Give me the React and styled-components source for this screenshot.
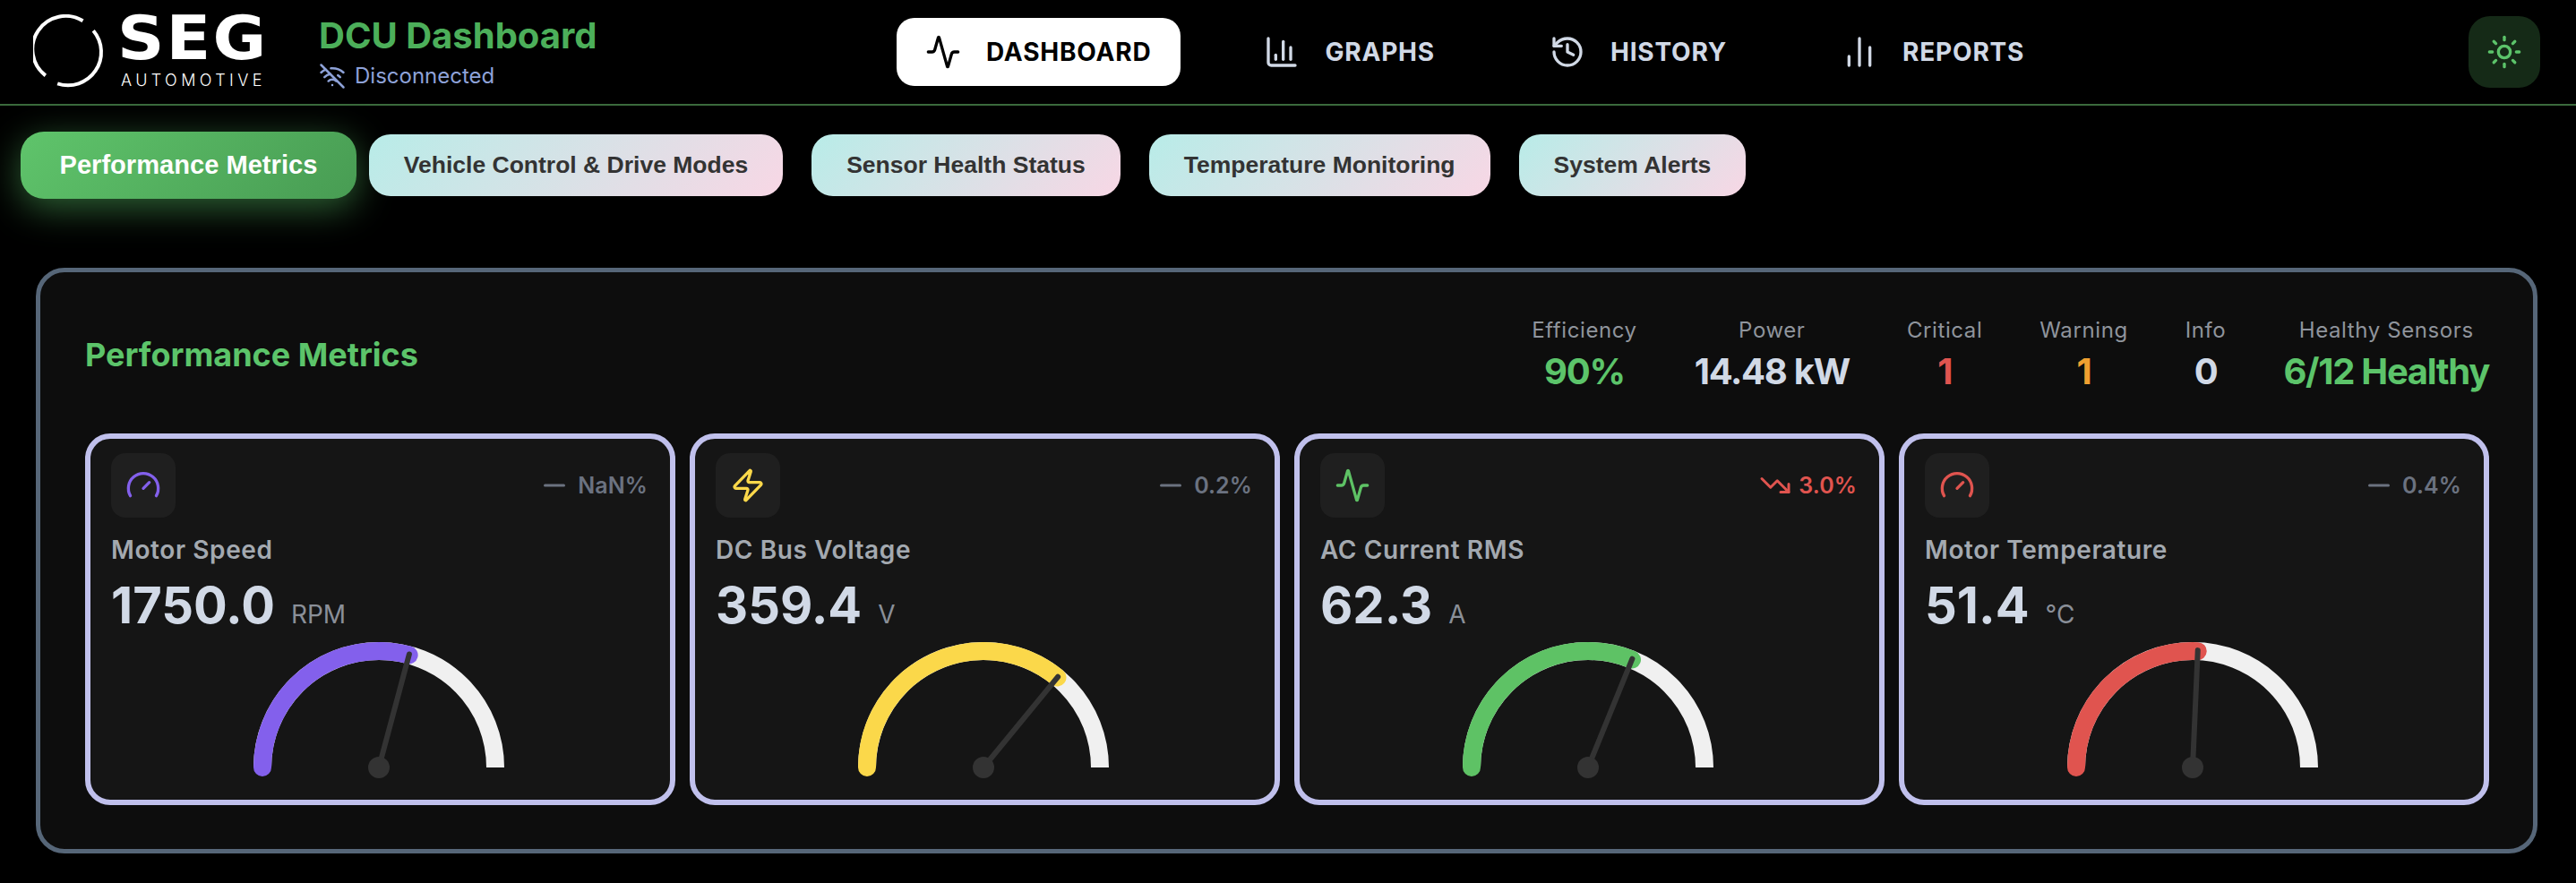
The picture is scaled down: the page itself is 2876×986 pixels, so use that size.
import React from 'react';
import styled, { createGlobalStyle } from 'styled-components';
import {
  Activity,
  ChartColumn,
  ChartNoAxesColumn,
  Gauge as GaugeIcon,
  History,
  Minus,
  Sun,
  TrendingDown,
  WifiOff,
  Zap,
} from 'lucide-react';

const GlobalStyle = createGlobalStyle`
  html, body {
    margin: 0;
    background: #000;
    font-family: Inter, "Liberation Sans", sans-serif;
  }
  * { box-sizing: border-box; }
`;

const Header = styled.header`
  display: grid;
  grid-template-columns: 1001px 1fr 80px;
  align-items: center;
  height: 118px;
  padding-right: 40px;
  border-bottom: 2px solid #3a6a3c;
`;

const Brand = styled.div`
  display: flex;
  align-items: center;
  padding-left: 37px;
`;

const LogoText = styled.div`
  display: flex;
  flex-direction: column;
  width: 157px;
  margin-left: 18px;
  color: #fff;
`;

const LogoName = styled.span`
  margin-left: -4px;
  font-family: "DejaVu Sans", sans-serif;
  font-weight: 700;
  font-size: 68px;
  line-height: 50px;
  letter-spacing: 2px;
  transform: scaleX(1.07);
  transform-origin: left center;
`;

const LogoSub = styled.span`
  margin-top: 14px;
  font-size: 18px;
  font-weight: 300;
  line-height: 16px;
  letter-spacing: 4.4px;
  white-space: nowrap;
`;

const Titles = styled.div`
  margin-left: 64px;
`;

const AppTitle = styled.h1`
  margin: 0;
  color: #4caf5a;
  font-size: 40px;
  font-weight: 700;
  line-height: 48px;
  white-space: nowrap;
`;

const Connection = styled.div`
  display: flex;
  align-items: center;
  gap: 10px;
  margin-top: 5px;
  color: #8ea2d8;
  font-size: 24px;
  line-height: 32px;
`;

const Nav = styled.nav`
  display: flex;
  align-items: center;
`;

const NavItem = styled.a`
  display: flex;
  align-items: center;
  gap: 28px;
  height: 76px;
  padding: 0 33px 0 32px;
  margin-right: ${(p) => p.$gap}px;
  border-radius: 20px;
  background: ${(p) => (p.$active ? '#fff' : 'transparent')};
  color: ${(p) => (p.$active ? '#000' : '#d1d9e6')};
  font-size: 28px;
  font-weight: 700;
  letter-spacing: 0.8px;
  white-space: nowrap;
`;

const ThemeButton = styled.button`
  display: flex;
  align-items: center;
  justify-content: center;
  width: 80px;
  height: 80px;
  padding: 0;
  border: 0;
  border-radius: 24px;
  background: #152a17;
  color: #5cc46a;
`;

const Tabs = styled.div`
  display: flex;
  align-items: center;
  height: 75px;
  margin: 29px 0 0 23px;
`;

const Tab = styled.button`
  height: 69px;
  padding: 0 39px;
  margin-right: 32px;
  border: 0;
  border-radius: 24px;
  background: linear-gradient(135deg, #b8ece8, #f8d7e5);
  color: #333;
  font-family: "Liberation Sans", sans-serif;
  font-size: 26.5px;
  font-weight: 700;
  white-space: nowrap;
`;

const ActiveTab = styled(Tab)`
  height: 75px;
  padding: 0 43.5px;
  margin-right: 14px;
  border-radius: 26px;
  background: linear-gradient(135deg, #5fc46b, #489c53);
  box-shadow: 0 10px 40px rgba(92, 196, 106, 0.5);
  color: #fff;
  font-size: 29.1px;
`;

const Panel = styled.section`
  width: 2793px;
  height: 654px;
  margin: 77px 0 0 40px;
  padding: 50px 49px 0 50px;
  border: 5px solid #566678;
  border-radius: 32px;
  background: #0d0d0d;
`;

const PanelHeader = styled.div`
  display: flex;
  align-items: center;
  justify-content: space-between;
  height: 84px;
`;

const PanelTitle = styled.h2`
  margin: 0;
  color: #5cc46a;
  font-size: 36px;
  font-weight: 700;
  line-height: 44px;
`;

const Stats = styled.div`
  display: flex;
  gap: 64px;
`;

const Stat = styled.div`
  display: flex;
  flex-direction: column;
  align-items: center;
  gap: 6px;
`;

const StatLabel = styled.span`
  color: #8f949c;
  font-size: 24px;
  line-height: 32px;
  letter-spacing: 0.6px;
`;

const StatValue = styled.span`
  color: ${(p) => p.$color};
  font-size: 40px;
  font-weight: 700;
  line-height: 48px;
  letter-spacing: -1.3px;
  white-space: nowrap;
`;

const Cards = styled.div`
  display: grid;
  grid-template-columns: repeat(4, 1fr);
  gap: 16px;
  margin-top: 46px;
`;

const Card = styled.article`
  display: flex;
  flex-direction: column;
  height: 415px;
  padding: 16px 25px 0 23px;
  border: 6px solid #c0c0ec;
  border-radius: 28px;
  background: #151515;
`;

const CardTop = styled.div`
  display: flex;
  align-items: center;
  justify-content: space-between;
`;

const IconBox = styled.div`
  display: flex;
  align-items: center;
  justify-content: center;
  width: 72px;
  height: 72px;
  border-radius: 16px;
  background: #1f1f1f;
  color: ${(p) => p.$color};
`;

const Trend = styled.div`
  display: flex;
  align-items: center;
  gap: 8px;
  color: ${(p) => p.$color};
  font-size: 25px;
  font-weight: 600;
  letter-spacing: 0.1px;
`;

const CardTitle = styled.div`
  margin-top: 18px;
  color: #a3a9b0;
  font-size: 28px;
  font-weight: 600;
  line-height: 36px;
  letter-spacing: 0.6px;
`;

const ValueRow = styled.div`
  display: flex;
  align-items: baseline;
  gap: 18px;
  margin-top: 12px;
`;

const Value = styled.span`
  color: #d1d9e6;
  font-size: 56px;
  font-weight: 700;
  line-height: 64px;
`;

const Unit = styled.span`
  color: #8a8f98;
  font-size: 28px;
`;

const GaugeWrap = styled.svg`
  display: block;
  align-self: center;
  width: 300px;
  height: 170px;
  margin: 2px 0 0 -1px;
`;

const navItems = [
  { label: 'DASHBOARD', icon: Activity, active: true, gap: 61 },
  { label: 'GRAPHS', icon: ChartColumn, gap: 63 },
  { label: 'HISTORY', icon: History, gap: 63 },
  { label: 'REPORTS', icon: ChartNoAxesColumn, gap: 0 },
];

const tabs = ['Vehicle Control & Drive Modes', 'Sensor Health Status', 'Temperature Monitoring', 'System Alerts'];

const stats = [
  { label: 'Efficiency', value: '90%', color: '#5cc46a' },
  { label: 'Power', value: '14.48 kW', color: '#d1d9e6' },
  { label: 'Critical', value: '1', color: '#e0544f' },
  { label: 'Warning', value: '1', color: '#f0a030' },
  { label: 'Info', value: '0', color: '#d1d9e6' },
  { label: 'Healthy Sensors', value: '6/12 Healthy', color: '#5cc46a' },
];

const cards = [
  { title: 'Motor Speed', value: '1750.0', unit: 'RPM', trend: 'NaN%', icon: GaugeIcon, color: '#8360ec', ratio: 1750 / 3000 },
  { title: 'DC Bus Voltage', value: '359.4', unit: 'V', trend: '0.2%', icon: Zap, color: '#fbd84a', ratio: 359.4 / 500 },
  { title: 'AC Current RMS', value: '62.3', unit: 'A', trend: '3.0%', down: true, icon: Activity, color: '#5ec265', ratio: 0.623 },
  { title: 'Motor Temperature', value: '51.4', unit: '°C', trend: '0.4%', icon: GaugeIcon, color: '#e0544f', ratio: 0.514 },
];

// needle and arc share a hub at (150, 147), ratio 0 is far left
const pointAt = (ratio, radius) => {
  const angle = Math.PI * (1 - ratio);
  return [150 + radius * Math.cos(angle), 147 - radius * Math.sin(angle)];
};

const GaugeDial = ({ ratio, color }) => {
  const [ex, ey] = pointAt(ratio, 130);
  const [nx, ny] = pointAt(ratio, 131);
  return (
    <GaugeWrap viewBox="0 0 300 170">
      <path d="M20 147A130 130 0 0 1 280 147" fill="none" stroke="#f0f0f0" strokeWidth="20" />
      <path d={`M20 147A130 130 0 0 1 ${ex} ${ey}`} fill="none" stroke={color} strokeWidth="20" strokeLinecap="round" />
      <line x1="150" y1="147" x2={nx} y2={ny} stroke="#333" strokeWidth="6" strokeLinecap="round" />
      <circle cx="150" cy="147" r="12" fill="#333" />
    </GaugeWrap>
  );
};

const LogoMark = () => (
  <svg width="80" height="84" viewBox="0 0 80 84" fill="none" stroke="#fff" strokeWidth="4">
    <path d="M55.500 7.300A37 37 0 0 0 13.800 68.300" />
    <path d="M67.200 18.300A37 37 0 0 1 27.200 77.300" />
  </svg>
);

export default function App() {
  return (
    <>
      <GlobalStyle />
      <Header>
        <Brand>
          <LogoMark />
          <LogoText>
            <LogoName>SEG</LogoName>
            <LogoSub>AUTOMOTIVE</LogoSub>
          </LogoText>
          <Titles>
            <AppTitle>DCU Dashboard</AppTitle>
            <Connection>
              <WifiOff size={30} strokeWidth={2} />
              Disconnected
            </Connection>
          </Titles>
        </Brand>
        <Nav>
          {navItems.map(({ label, icon: Icon, active, gap }) => (
            <NavItem key={label} $active={active} $gap={gap}>
              <Icon size={40} strokeWidth={2} />
              {label}
            </NavItem>
          ))}
        </Nav>
        <ThemeButton>
          <Sun size={40} strokeWidth={2} />
        </ThemeButton>
      </Header>

      <Tabs>
        <ActiveTab>Performance Metrics</ActiveTab>
        {tabs.map((t) => (
          <Tab key={t}>{t}</Tab>
        ))}
      </Tabs>

      <Panel>
        <PanelHeader>
          <PanelTitle>Performance Metrics</PanelTitle>
          <Stats>
            {stats.map((s) => (
              <Stat key={s.label}>
                <StatLabel>{s.label}</StatLabel>
                <StatValue $color={s.color}>{s.value}</StatValue>
              </Stat>
            ))}
          </Stats>
        </PanelHeader>
        <Cards>
          {cards.map((c) => {
            const TrendIcon = c.down ? TrendingDown : Minus;
            const Icon = c.icon;
            return (
              <Card key={c.title}>
                <CardTop>
                  <IconBox $color={c.color}>
                    <Icon size={40} strokeWidth={2} />
                  </IconBox>
                  <Trend $color={c.down ? '#e0544f' : '#6b7280'}>
                    <TrendIcon size={36} strokeWidth={2} />
                    {c.trend}
                  </Trend>
                </CardTop>
                <CardTitle>{c.title}</CardTitle>
                <ValueRow>
                  <Value>{c.value}</Value>
                  <Unit>{c.unit}</Unit>
                </ValueRow>
                <GaugeDial ratio={c.ratio} color={c.color} />
              </Card>
            );
          })}
        </Cards>
      </Panel>
    </>
  );
}
